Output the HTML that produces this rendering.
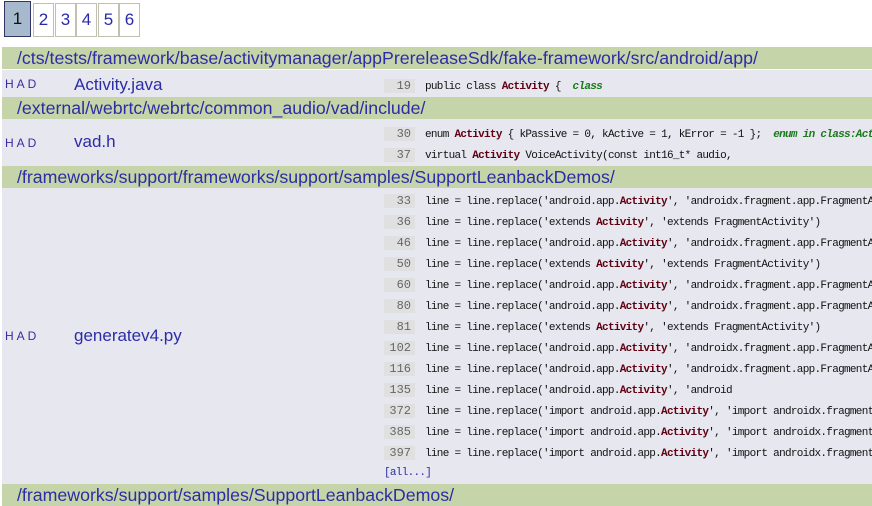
<!DOCTYPE html>
<html><head><meta charset="utf-8"><style>
body{margin:0;width:872px;height:505px;overflow:hidden;background:#fff;font-family:"Liberation Sans","DejaVu Sans",sans-serif;position:relative}
.pg{position:absolute;top:3px;height:32px;width:19px;border:1px solid #c0c0b0;color:#2a2aa8;font-size:17px;line-height:32px;text-align:center;box-sizing:content-box}
.pg.cur{top:1px;left:4px;width:25px;height:34px;line-height:34px;background:#a7b9cd;border:1px solid #333366;color:#111}
.dir{position:absolute;left:2px;width:870px;background:#c6d5a9;color:#2c2ca6;font-size:17.75px;padding-left:15px;box-sizing:border-box;height:22px;line-height:22px;white-space:nowrap;overflow:hidden}
.file{position:absolute;left:2px;width:870px;background:#e7e7f0}
.had{position:absolute;left:3px;font-size:12px;color:#3a2aa0;letter-spacing:3px}
.fn{position:absolute;left:72px;font-size:17px;color:#2c2ca6}
.ln{position:absolute;left:384px;width:488px;height:14px;font-family:"Liberation Mono",monospace;font-size:11px;letter-spacing:-0.7px;line-height:14px;white-space:pre;color:#111;overflow:hidden}
.ln i{font-style:normal;display:inline-block;width:27px;padding-right:4px;background:#e0e0e0;color:#666;text-align:right;margin-right:10px;font-size:12px;letter-spacing:0}
.ln b{color:#600010}
.ln em{color:#1a7a1a;font-weight:bold}
.all{position:absolute;left:384px;font-family:"Liberation Mono",monospace;font-size:11px;letter-spacing:-0.7px;color:#2c2ca6}
</style></head><body>
<div class="pg cur">1</div>
<div class="pg" style="left:33px">2</div>
<div class="pg" style="left:55px">3</div>
<div class="pg" style="left:76px">4</div>
<div class="pg" style="left:98px">5</div>
<div class="pg" style="left:119px">6</div>

<div class="dir" style="top:47px">/cts/tests/framework/base/activitymanager/appPrereleaseSdk/fake-framework/src/android/app/</div>
<div class="file" style="top:70px;height:27px">
<div class="had" style="top:7px">HAD</div><div class="fn" style="top:5px">Activity.java</div></div>
<div class="ln" style="top:79px"><i>19</i>public class <b>Activity</b> {  <em>class</em></div>

<div class="dir" style="top:97px">/external/webrtc/webrtc/common_audio/vad/include/</div>
<div class="file" style="top:119px;height:47px">
<div class="had" style="top:17px">HAD</div><div class="fn" style="top:13px">vad.h</div></div>
<div class="ln" style="top:127px"><i>30</i>enum <b>Activity</b> { kPassive = 0, kActive = 1, kError = -1 };  <em>enum in class:ActivityVoice</em></div>
<div class="ln" style="top:148px"><i>37</i>virtual <b>Activity</b> VoiceActivity(const int16_t* audio,</div>

<div class="dir" style="top:166px">/frameworks/support/frameworks/support/samples/SupportLeanbackDemos/</div>
<div class="file" style="top:188px;height:296px">
<div class="had" style="top:141px">HAD</div><div class="fn" style="top:138px">generatev4.py</div></div>
<div class="ln" style="top:194px"><i>33</i>line = line.replace('android.app.<b>Activity</b>', 'androidx.fragment.app.FragmentActivity')</div>
<div class="ln" style="top:215px"><i>36</i>line = line.replace('extends <b>Activity</b>', 'extends FragmentActivity')</div>
<div class="ln" style="top:236px"><i>46</i>line = line.replace('android.app.<b>Activity</b>', 'androidx.fragment.app.FragmentActivity')</div>
<div class="ln" style="top:257px"><i>50</i>line = line.replace('extends <b>Activity</b>', 'extends FragmentActivity')</div>
<div class="ln" style="top:278px"><i>60</i>line = line.replace('android.app.<b>Activity</b>', 'androidx.fragment.app.FragmentActivity')</div>
<div class="ln" style="top:299px"><i>80</i>line = line.replace('android.app.<b>Activity</b>', 'androidx.fragment.app.FragmentActivity')</div>
<div class="ln" style="top:320px"><i>81</i>line = line.replace('extends <b>Activity</b>', 'extends FragmentActivity')</div>
<div class="ln" style="top:341px"><i>102</i>line = line.replace('android.app.<b>Activity</b>', 'androidx.fragment.app.FragmentActivity')</div>
<div class="ln" style="top:362px"><i>116</i>line = line.replace('android.app.<b>Activity</b>', 'androidx.fragment.app.FragmentActivity')</div>
<div class="ln" style="top:383px"><i>135</i>line = line.replace('android.app.<b>Activity</b>', 'android</div>
<div class="ln" style="top:404px"><i>372</i>line = line.replace('import android.app.<b>Activity</b>', 'import androidx.fragment.app.FragmentActivity')</div>
<div class="ln" style="top:425px"><i>385</i>line = line.replace('import android.app.<b>Activity</b>', 'import androidx.fragment.app.FragmentActivity')</div>
<div class="ln" style="top:446px"><i>397</i>line = line.replace('import android.app.<b>Activity</b>', 'import androidx.fragment.app.FragmentActivity')</div>
<div class="all" style="top:467px">[all...]</div>

<div class="dir" style="top:484px">/frameworks/support/samples/SupportLeanbackDemos/</div>
</body></html>
